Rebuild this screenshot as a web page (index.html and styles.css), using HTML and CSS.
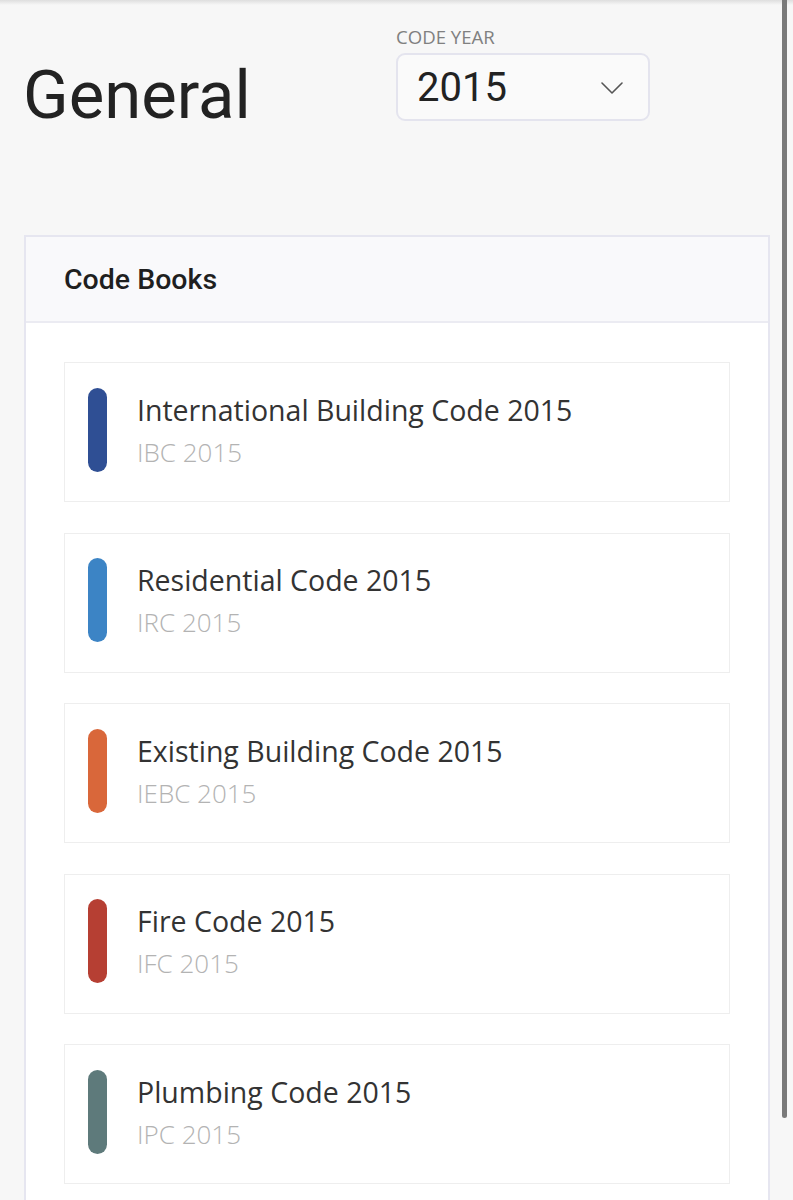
FILE: index.html
```html
<!DOCTYPE html>
<html lang="en">
<head>
<meta charset="utf-8">
<title>General</title>
<link rel="stylesheet" href="styles.css">
</head>
<body>
<div class="topshade"></div>
<header class="head">
  <h1 class="title">General</h1>
  <div class="year">
    <div class="year-label">CODE YEAR</div>
    <div class="select">
      <span class="select-value">2015</span>
      <svg class="chevron" width="22" height="12" viewBox="0 0 22 12"><path d="M1 1 L11 11 L21 1" fill="none" stroke="#555" stroke-width="1.6" stroke-linecap="round" stroke-linejoin="round"/></svg>
    </div>
  </div>
</header>
<section class="card">
  <div class="card-head">Code Books</div>
  <div class="card-body">
    <div class="book"><span class="bar bar-ibc"></span><div class="book-text"><div class="book-name">International Building Code 2015</div><div class="book-code">IBC 2015</div></div></div>
    <div class="book"><span class="bar bar-irc"></span><div class="book-text"><div class="book-name">Residential Code 2015</div><div class="book-code">IRC 2015</div></div></div>
    <div class="book"><span class="bar bar-iebc"></span><div class="book-text"><div class="book-name">Existing Building Code 2015</div><div class="book-code">IEBC 2015</div></div></div>
    <div class="book"><span class="bar bar-ifc"></span><div class="book-text"><div class="book-name">Fire Code 2015</div><div class="book-code">IFC 2015</div></div></div>
    <div class="book"><span class="bar bar-ipc"></span><div class="book-text"><div class="book-name">Plumbing Code 2015</div><div class="book-code">IPC 2015</div></div></div>
  </div>
</section>
<div class="scrollbar"></div>
</body>
</html>
```

FILE: styles.css
```css
html, body {
  margin: 0;
  padding: 0;
  background: #f7f7f7;
}
body {
  font-family: Roboto, "Liberation Sans", sans-serif;
  color: #222;
  position: relative;
  min-height: 1400px;
}
.topshade {
  height: 5px;
  background: linear-gradient(#dedede, #f7f7f7);
}
.head {
  display: grid;
  grid-template-columns: 373px auto;
  align-items: start;
  padding: 20px 0 0 23px;
}
.title {
  margin: 34px 0 0 0;
  font-family: Roboto, sans-serif;
  font-weight: 400;
  font-size: 67px;
  line-height: 72px;
  color: #222;
}
.year-label {
  font-family: "Open Sans", sans-serif;
  font-size: 18.6px;
  line-height: 24px;
  color: #808080;
}
.select {
  margin-top: 4px;
  height: 64px;
  width: 206px;
  border: 2px solid #e4e4ee;
  border-radius: 9px;
  background: #fafafa;
  display: flex;
  align-items: center;
  justify-content: space-between;
  padding: 0 25px 0 19px;
  box-sizing: content-box;
}
.select-value {
  font-size: 40px;
  color: #222;
}
.chevron {
  display: block;
  margin-top: 1px;
}
.card {
  margin: 104px 23px 0 24px;
  border: 2px solid #e6e6f0;
  border-bottom: none;
  background: #fff;
}
.card-head {
  height: 84px;
  display: flex;
  align-items: center;
  padding-left: 38px;
  background: #f9f9fb;
  border-bottom: 2px solid #ebebf2;
  font-weight: 500;
  font-size: 28.5px;
  color: #1f1f1f;
}
.card-body {
  padding: 39px 38px 60px 38px;
  display: flex;
  flex-direction: column;
  gap: 30.5px;
}
.book {
  height: 138px;
  border: 1px solid #eeeeee;
  background: #fff;
  display: flex;
  align-items: center;
  padding-left: 23px;
  gap: 30px;
}
.bar {
  width: 19px;
  height: 84px;
  border-radius: 10px;
  flex: none;
  margin-top: -5px;
}
.bar-ibc { background: #2f4f94; }
.bar-irc { background: #3c84c5; }
.bar-iebc { background: #d9673a; }
.bar-ifc { background: #b63f33; }
.bar-ipc { background: #5e7a7b; }
.book-text {
  font-family: "Open Sans", sans-serif;
  line-height: 42px;
  margin-top: -3px;
}
.book-name {
  color: #333;
  font-weight: 400;
  font-size: 28.5px;
}
.book-code {
  color: #b3b3b3;
  font-weight: 300;
  font-size: 26px;
}
.scrollbar {
  position: absolute;
  top: 0;
  right: 6px;
  width: 5px;
  height: 1118px;
  background: #7a7a7a;
  border-radius: 0 0 3px 3px;
}
```
